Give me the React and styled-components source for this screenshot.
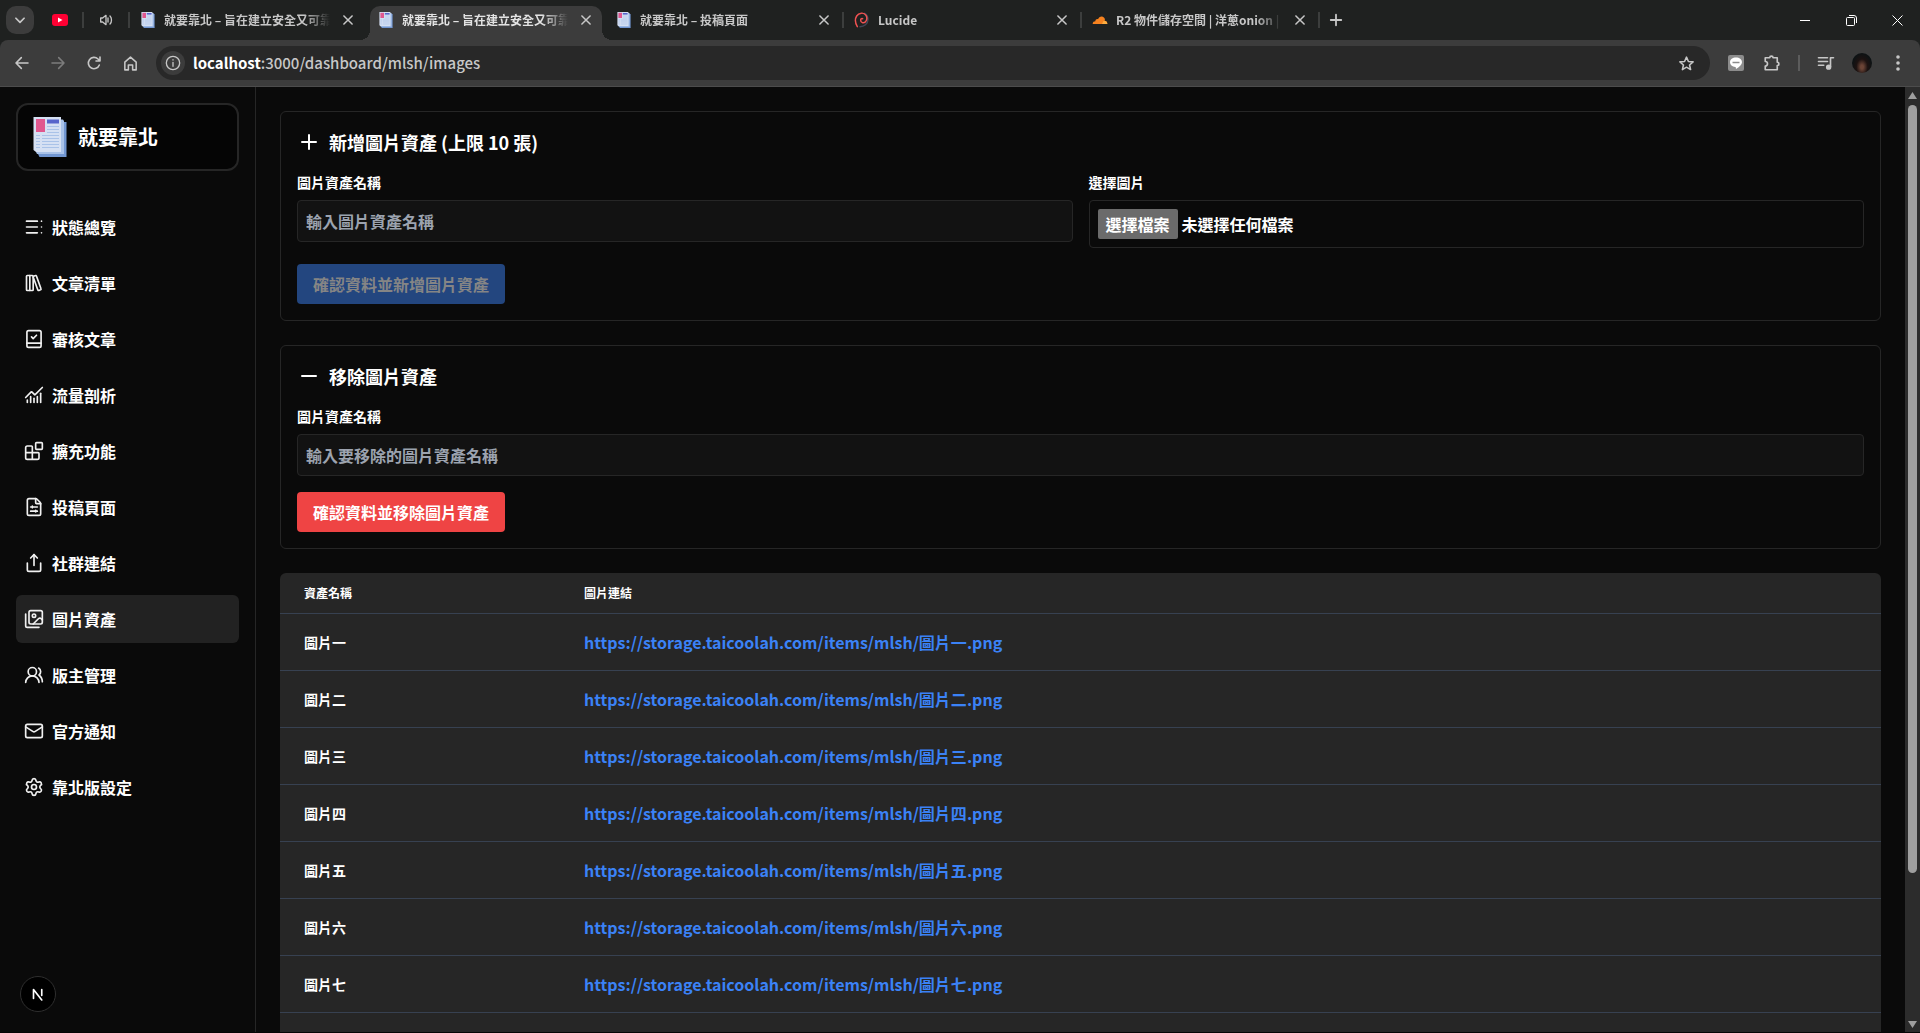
import React from "react";
import styled, { createGlobalStyle, css } from "styled-components";
import {
  TableOfContents, LibraryBig, ChartNoAxesCombined, Blocks, FileSliders,
  Share, UsersRound, Settings, Plus, Minus,
} from "lucide-react";

const Global = createGlobalStyle`
  *, *::before, *::after { box-sizing: border-box; }
  body {
    margin: 0;
    background: #0a0a0a;
    color: #ffffff;
    font-family: "Noto Sans CJK TC", "Noto Sans", sans-serif;
    font-size: 16px;
    line-height: 24px;
    font-weight: 700;
  }
  button, input { font: inherit; color: inherit; }
  svg { display: block; flex: none; }
`;

const Window = styled.div`
  display: flex;
  flex-direction: column;
  height: 100vh;
  overflow: hidden;
  border-bottom: 1px solid #050505;
`;

/* ---------- browser chrome ---------- */
const TabStrip = styled.header`
  display: flex;
  align-items: center;
  height: 40px;
  flex: none;
  background: #1f2120;
  color: #c7c7c7;
  font-size: 12px;
  line-height: 20px;
`;
const PlainButton = styled.button`
  display: flex;
  align-items: center;
  justify-content: center;
  flex: none;
  width: ${(p) => p.$w || 28}px;
  height: 28px;
  padding: 0;
  border: 0;
  border-radius: ${(p) => p.$radius || 14}px;
  background: ${(p) => p.$bg || "transparent"};
  color: ${(p) => p.$color || "#c7c7c7"};
`;
const StripLead = styled.div`
  display: flex;
  align-items: center;
  gap: 14px;
  width: 132px;
  padding-left: 6px;
  flex: none;
  > button { margin-right: 4px; }
`;
const Divider = styled.span`
  width: 2px;
  height: 16px;
  margin: 0 ${(p) => p.$space || 0}px;
  flex: none;
  background: ${(p) => (p.$hidden ? "transparent" : p.$light ? "#5c5c5c" : "#3c3e3d")};
`;
const TabBox = styled.div`
  position: relative;
  display: flex;
  align-items: center;
  gap: 8px;
  width: 232px;
  height: 34px;
  margin-top: 6px;
  padding: 0 6px 6px 8px;
  border-radius: 10px 10px 0 0;
  flex: none;
  ${(p) => p.$active && css`
    background: #3c3c3c;
    color: #e3e3e3;
    &::before, &::after {
      content: "";
      position: absolute;
      bottom: 0;
      width: 10px;
      height: 10px;
    }
    &::before { left: -10px; background: radial-gradient(circle at 0 0, transparent 10px, #3c3c3c 10px); }
    &::after { right: -10px; background: radial-gradient(circle at 100% 0, transparent 10px, #3c3c3c 10px); }
  `}
`;
const TabTitle = styled.span`
  flex: 1;
  min-width: 0;
  overflow: hidden;
  white-space: nowrap;
  mask-image: linear-gradient(to right, #000 calc(100% - 26px), transparent);
`;
const WindowControls = styled.div`
  display: flex;
  margin-left: auto;
`;
const Toolbar = styled.div`
  display: flex;
  align-items: center;
  height: 47px;
  flex: none;
  padding: 0 8px;
  background: #3c3c3c;
  border-bottom: 1px solid #4c4c4c;
  border-radius: 8px 8px 0 0;
  color: #c7c7c7;
`;
const ToolbarBack = styled.div`background: #1f2120;`;
const NavButtons = styled.div`
  display: flex;
  gap: 8px;
  width: 148px;
`;
const AddressBar = styled.div`
  display: flex;
  align-items: center;
  flex: 1;
  height: 34px;
  padding: 0 10px 0 5px;
  gap: 8px;
  border-radius: 17px;
  background: #282828;
  font-size: 15px;
  font-weight: 500;
`;
const InfoBadge = styled.span`
  display: grid;
  place-items: center;
  width: 24px;
  height: 24px;
  border-radius: 12px;
  background: #3c3c3c;
`;
const Url = styled.span`
  flex: 1;
  color: #c7c7c7;
  b { color: #ffffff; font-weight: 700; }
`;
const Extensions = styled.div`
  display: flex;
  align-items: center;
  justify-content: flex-end;
  gap: 8px;
  width: 202px;
`;
const Avatar = styled.span`
  width: 20px;
  height: 20px;
  margin: 0 4px;
  border-radius: 10px;
  background: radial-gradient(ellipse at 50% 70%, #6b4436 0 10%, #1c1211 40%, #0b1214 75%);
`;

/* ---------- page ---------- */
const Page = styled.div`
  display: flex;
  flex: 1;
  min-height: 0;
  position: relative;
`;
const Sidebar = styled.aside`
  width: 256px;
  flex: none;
  padding: 16px;
  border-right: 1px solid #262626;
`;
const Brand = styled.a`
  display: flex;
  align-items: center;
  gap: 8px;
  padding: 12px;
  border: 2px solid #262626;
  border-radius: 12px;
  background: #050505;
  color: #ffffff;
  font-size: 20px;
  line-height: 28px;
  text-decoration: none;
`;
const Menu = styled.nav`
  display: flex;
  flex-direction: column;
  gap: 8px;
  margin-top: 32px;
`;
const MenuItem = styled.a`
  display: flex;
  align-items: center;
  gap: 8px;
  height: 48px;
  padding: 0 8px;
  border-radius: 6px;
  background: ${(p) => (p.$active ? "#222222" : "transparent")};
  color: #ffffff;
  text-decoration: none;
  svg { color: #f0f0f0; }
`;
const DevBadge = styled.button`
  position: absolute;
  left: 20px;
  bottom: 20px;
  display: grid;
  place-items: center;
  width: 36px;
  height: 36px;
  padding: 0;
  border: 1px solid #2e2e2e;
  border-radius: 18px;
  background: #000000;
  color: #ffffff;
`;
const Main = styled.main`
  display: flex;
  flex-direction: column;
  gap: 24px;
  flex: 1;
  min-width: 0;
  padding: 24px;
  overflow: hidden;
`;
const Card = styled.form`
  flex: none;
  padding: 16px;
  border: 1px solid #262626;
  border-radius: 6px;
`;
const CardTitle = styled.h2`
  display: flex;
  align-items: center;
  gap: 8px;
  margin: 0 0 16px;
  font-size: 18px;
  line-height: 28px;
`;
const Fields = styled.div`
  display: grid;
  grid-template-columns: repeat(${(p) => p.$cols}, minmax(0, 1fr));
  align-items: start;
  gap: 16px;
  margin-bottom: 16px;
`;
const Label = styled.label`
  display: block;
  margin-bottom: 8px;
  font-size: 14px;
  line-height: 20px;
`;
const TextInput = styled.input`
  display: block;
  width: 100%;
  height: 42px;
  padding: 8px;
  border: 1px solid #262626;
  border-radius: 4px;
  background: #121212;
  &::placeholder { color: #9ca3af; opacity: 1; }
`;
const FileBox = styled.label`
  display: flex;
  align-items: center;
  gap: 4px;
  height: 48px;
  padding: 8px;
  border: 1px solid #262626;
  border-radius: 4px;
`;
const FileButton = styled.span`
  padding: 3px 8px;
  border-radius: 2px;
  background: #6b6b6b;
`;
const HiddenFile = styled.input`
  position: absolute;
  width: 1px;
  height: 1px;
  opacity: 0;
`;
const Submit = styled.button`
  display: block;
  height: 40px;
  padding: 0 16px;
  border: 0;
  border-radius: 4px;
  background: ${(p) => (p.$danger ? "#ef4444" : "#3b82f6")};
  color: #ffffff;
  &:disabled { background: #23467f; color: #858585; }
`;
const Table = styled.table`
  width: 100%;
  flex: none;
  border-collapse: separate;
  border-spacing: 0;
  table-layout: fixed;
  border-radius: 6px;
  overflow: hidden;
  background: #262626;
  text-align: left;
`;
const Th = styled.th`
  width: ${(p) => (p.$narrow ? "280px" : "auto")};
  padding: 12px 24px;
  border-bottom: 1px solid #374151;
  font-size: 12px;
  line-height: 16px;
`;
const Td = styled.td`
  padding: 16px 24px;
  border-bottom: 1px solid #374151;
  font-size: ${(p) => (p.$name ? 14 : 16)}px;
  line-height: 24px;
`;
const Link = styled.a`
  color: #3b82f6;
  text-decoration: none;
`;
const Scrollbar = styled.div`
  display: flex;
  flex-direction: column;
  align-items: center;
  width: 15px;
  flex: none;
  padding: 5px 0 4px;
  background: #2c2c2c;
`;
const Thumb = styled.div`
  width: 9px;
  margin: 6px 0 auto;
  height: 82%;
  border-radius: 5px;
  background: #9f9f9f;
`;

/* ---------- drawings ---------- */
function Line({ size = 20, width = 2, children }) {
  return (
    <svg width={size} height={size} viewBox="0 0 24 24" fill="none" stroke="currentColor"
      strokeWidth={width} strokeLinecap="round" strokeLinejoin="round" aria-hidden="true">{children}</svg>
  );
}
const BookIcon = () => (
  <Line>
    <rect x="3.5" y="2" width="17" height="20" rx="2" />
    <path d="M3.5 17h17M9 9.500l2 2 4-4" />
  </Line>
);
const ImagesIcon = () => (
  <Line>
    <path d="M18 22H4a2 2 0 0 1-2-2V6" />
    <path d="m22 13-1.296-1.296a2.41 2.41 0 0 0-3.408 0L11 18" />
    <circle cx="12" cy="8" r="2" />
    <rect x="6" y="2" width="16" height="16" rx="2" />
  </Line>
);
const MailIcon = () => (
  <Line>
    <rect x="2" y="4" width="20" height="16" rx="2" />
    <path d="m22 7-8.97 5.7a1.94 1.94 0 0 1-2.06 0L2 7" />
  </Line>
);
function Newspaper({ size }) {
  return (
    <svg width={size} height={size} viewBox="0 0 40 40" aria-hidden="true">
      <path d="M8 5h28.500v35H9.500L8 37z" fill="#7297d2" />
      <path d="M6 2.500h27l1 1.500v33H7l-1-2z" fill="#a9c2e8" />
      <path d="M3.500 0H31v35H6l-2.500-2z" fill="#d5e0f3" />
      <path d="M6 2h9v13H6z" fill="#e0578f" />
      <path d="M17 2.500h12v4H17z" fill="#5765cb" />
      <path d="M17 9.500h12M17 12.500h12M17 15.500h12M6 18.500h4M12 18.500h17M6 21.500h4M12 21.500h17M6 24.500h4M12 24.500h17M6 27.500h4M12 27.500h17M6 30.500h4M12 30.500h17" stroke="#a9c2e8" strokeWidth="1.200" />
    </svg>
  );
}
const Close = () => <Line size={14} width={2.6}><path d="M5 5l14 14M19 5L5 19" /></Line>;
const LucideMark = () => (
  <svg width="16" height="16" viewBox="0 0 24 24" fill="none" strokeWidth="2.2" strokeLinecap="round">
    <path d="M9 22c6 0 12-4 12-11 0-4-2-7-5-9" stroke="#3f4656" />
    <path d="M5 22C2 17 1 11 4 6c3-5 11-6 14-1 3 5 0 12-5 11-4-1-4-7 0-6" stroke="#f05252" />
  </svg>
);
const CloudMark = () => (
  <svg width="16" height="16" viewBox="0 0 24 24">
    <path d="M1 18c0-3 2-4 4-4 0-3 3-4 4-3 1-3 4-5 7-4 3 1 4 4 3 6 3 0 4 2 4 5z" fill="#f6821f" />
    <path d="M17 14c4-2 6 1 6 4h-8z" fill="#fbad41" />
  </svg>
);

const tabs = [
  { icon: <Newspaper size={16} />, title: "就要靠北 – 旨在建立安全又可靠" },
  { icon: <Newspaper size={16} />, title: "就要靠北 – 旨在建立安全又可靠", active: true },
  { icon: <Newspaper size={16} />, title: "就要靠北 – 投稿頁面" },
  { icon: <LucideMark />, title: "Lucide" },
  { icon: <CloudMark />, title: "R2 物件儲存空間 | 洋蔥onion |" },
];
const lucide = (Icon) => <Icon size={20} strokeWidth={2} />;
const menu = [
  [lucide(TableOfContents), "狀態總覽"],
  [lucide(LibraryBig), "文章清單"],
  [<BookIcon />, "審核文章"],
  [lucide(ChartNoAxesCombined), "流量剖析"],
  [lucide(Blocks), "擴充功能"],
  [lucide(FileSliders), "投稿頁面"],
  [lucide(Share), "社群連結"],
  [<ImagesIcon />, "圖片資產"],
  [lucide(UsersRound), "版主管理"],
  [<MailIcon />, "官方通知"],
  [lucide(Settings), "靠北版設定"],
];
const assets = ["圖片一", "圖片二", "圖片三", "圖片四", "圖片五", "圖片六", "圖片七", "圖片八"];

function BrowserChrome() {
  return (
    <>
      <TabStrip>
        <StripLead>
          <PlainButton $bg="#3c3c3c" $radius={10} aria-label="搜尋分頁"><Line size={14} width={3}><path d="M5 9l7 7 7-7" /></Line></PlainButton>
          <svg width="16" height="12" viewBox="0 0 16 12"><rect width="16" height="12" rx="3" fill="#ff0033" /><path d="M6 3.500v5L10.500 6z" fill="#fff" /></svg>
          <Divider />
          <Line size={16} width={2}><path d="M4 9v6h3l5 4V5L7 9zM15 9v6M18 6c3 3 3 9 0 12" /></Line>
          <Divider />
        </StripLead>
        {tabs.map((t, i) => (
          <React.Fragment key={i}>
            <TabBox $active={t.active}>
              {t.icon}
              <TabTitle>{t.title}</TabTitle>
              <PlainButton $w={20} aria-label="關閉分頁"><Close /></PlainButton>
            </TabBox>
            <Divider $space={2} $hidden={i < 2} />
          </React.Fragment>
        ))}
        <PlainButton aria-label="新分頁"><Line size={18} width={2.4}><path d="M12 5v14M5 12h14" /></Line></PlainButton>
        <WindowControls>
          <PlainButton $w={46} $color="#fff" aria-label="最小化"><svg width="10" height="10"><path d="M0 5.500h10" stroke="#fff" /></svg></PlainButton>
          <PlainButton $w={46} $color="#fff" aria-label="還原"><svg width="11" height="11" fill="none" stroke="#fff"><rect x="0.500" y="2.500" width="8" height="8" rx="1" /><path d="M3 .5h5a2.500 2.500 0 0 1 2.500 2.500v5" /></svg></PlainButton>
          <PlainButton $w={46} $color="#fff" aria-label="關閉"><svg width="11" height="11" stroke="#fff"><path d="M.5.5l10 10M10.500.5l-10 10" /></svg></PlainButton>
        </WindowControls>
      </TabStrip>
      <ToolbarBack>
        <Toolbar>
          <NavButtons>
            <PlainButton aria-label="上一頁"><Line size={16} width={2.4}><path d="M21 12H3M11 4l-8 8 8 8" /></Line></PlainButton>
            <PlainButton $color="#7c7c7c" aria-label="下一頁"><Line size={16} width={2.4}><path d="M3 12h18M13 4l8 8-8 8" /></Line></PlainButton>
            <PlainButton aria-label="重新載入"><Line size={16} width={2.4}><path d="M20 15a8.500 8.500 0 1 1-2-9l3 3M21 3v6h-6" /></Line></PlainButton>
            <PlainButton aria-label="首頁"><Line size={17} width={2.2}><path d="M4 10l8-7 8 7v11h-5v-7H9v7H4z" /></Line></PlainButton>
          </NavButtons>
          <AddressBar>
            <InfoBadge><Line size={16} width={2}><circle cx="12" cy="12" r="10" /><path d="M12 11v6M12 7v.500" /></Line></InfoBadge>
            <Url><b>localhost</b>:3000/dashboard/mlsh/images</Url>
            <PlainButton aria-label="加入書籤"><Line size={17} width={2.2}><path d="M12 3l2.700 6.100 6.600.6-5 4.400 1.500 6.500L12 17.200 6.200 20.600l1.500-6.500-5-4.400 6.600-.6z" /></Line></PlainButton>
          </AddressBar>
          <Extensions>
            <PlainButton aria-label="LINE"><svg width="16" height="16" viewBox="0 0 16 16"><rect width="16" height="16" rx="2" fill="#8c8c8c" /><path d="M8 2.500c3.400 0 6 2 6 4.700 0 2.600-2.700 4.500-6 6.800-.3-1 .2-1.800-.8-2C4.200 11.700 2 9.800 2 7.200c0-2.700 2.600-4.700 6-4.700z" fill="#fff" /><path d="M4.500 7.500h7" stroke="#8c8c8c" strokeWidth="1.500" /></svg></PlainButton>
            <PlainButton aria-label="擴充功能"><Line size={18} width={2.2}><path d="M3 5h6a2.200 2.200 0 0 1 4.400 0H19v6a2.200 2.200 0 0 1 0 4.400V21H3v-5c4 0 4-6 0-6z" /></Line></PlainButton>
            <Divider $space={4} $light />
            <PlainButton aria-label="媒體控制"><Line size={18} width={2.2}><path d="M2 5h12M2 10h12M2 15h7M22 5h-4v12" /><circle cx="15.500" cy="17.500" r="2.500" fill="currentColor" /></Line></PlainButton>
            <Avatar />
            <PlainButton aria-label="選單"><svg width="4" height="16" viewBox="0 0 4 16" fill="currentColor"><circle cx="2" cy="2" r="1.800" /><circle cx="2" cy="8" r="1.800" /><circle cx="2" cy="14" r="1.800" /></svg></PlainButton>
          </Extensions>
        </Toolbar>
      </ToolbarBack>
    </>
  );
}

export default function App() {
  return (
    <Window>
      <Global />
      <BrowserChrome />
      <Page>
        <Sidebar>
          <Brand href="#"><Newspaper size={40} />就要靠北</Brand>
          <Menu>
            {menu.map(([icon, text]) => (
              <MenuItem key={text} href="#" $active={text === "圖片資產"}>{icon}{text}</MenuItem>
            ))}
          </Menu>
        </Sidebar>
        <Main>
          <Card>
            <CardTitle><Plus size={24} />新增圖片資產 (上限 10 張)</CardTitle>
            <Fields $cols={2}>
              <div>
                <Label htmlFor="new-name">圖片資產名稱</Label>
                <TextInput id="new-name" placeholder="輸入圖片資產名稱" />
              </div>
              <div>
                <Label htmlFor="new-file">選擇圖片</Label>
                <FileBox>
                  <FileButton>選擇檔案</FileButton>未選擇任何檔案
                  <HiddenFile id="new-file" type="file" />
                </FileBox>
              </div>
            </Fields>
            <Submit type="button" disabled>確認資料並新增圖片資產</Submit>
          </Card>
          <Card>
            <CardTitle><Minus size={24} />移除圖片資產</CardTitle>
            <Fields $cols={1}>
              <div>
                <Label htmlFor="old-name">圖片資產名稱</Label>
                <TextInput id="old-name" placeholder="輸入要移除的圖片資產名稱" />
              </div>
            </Fields>
            <Submit type="button" $danger>確認資料並移除圖片資產</Submit>
          </Card>
          <Table>
            <thead><tr><Th $narrow>資產名稱</Th><Th>圖片連結</Th></tr></thead>
            <tbody>
              {assets.map((name) => (
                <tr key={name}>
                  <Td $name>{name}</Td>
                  <Td><Link href="#">https://storage.taicoolah.com/items/mlsh/{name}.png</Link></Td>
                </tr>
              ))}
            </tbody>
          </Table>
        </Main>
        <Scrollbar>
          <svg width="9" height="7"><path d="M4.500 0L9 7H0z" fill="#9f9f9f" /></svg>
          <Thumb />
          <svg width="9" height="7"><path d="M0 0h9L4.500 7z" fill="#9f9f9f" /></svg>
        </Scrollbar>
        <DevBadge aria-label="Next.js"><Line size={18} width={2.2}><path d="M6 18V6l11 14M17 6v8" /></Line></DevBadge>
      </Page>
    </Window>
  );
}
